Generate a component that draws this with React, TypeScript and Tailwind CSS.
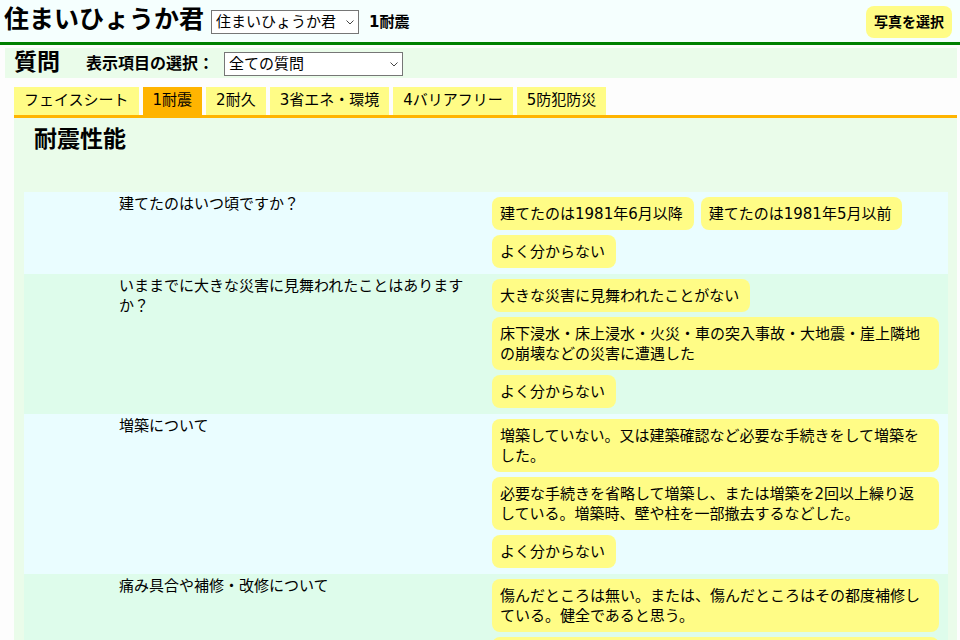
import type { ReactNode } from "react";

const tabs = ["フェイスシート", "1耐震", "2耐久", "3省エネ・環境", "4バリアフリー", "5防犯防災"] as const;

const activeTab = "1耐震";

const questions = [
  {
    title: "建てたのはいつ頃ですか？",
    answers: ["建てたのは1981年6月以降", "建てたのは1981年5月以前", "よく分からない"],
  },
  {
    title: "いままでに大きな災害に見舞われたことはありますか？",
    answers: [
      "大きな災害に見舞われたことがない",
      "床下浸水・床上浸水・火災・車の突入事故・大地震・崖上隣地の崩壊などの災害に遭遇した",
      "よく分からない",
    ],
  },
  {
    title: "増築について",
    answers: [
      "増築していない。又は建築確認など必要な手続きをして増築をした。",
      "必要な手続きを省略して増築し、または増築を2回以上繰り返している。増築時、壁や柱を一部撤去するなどした。",
      "よく分からない",
    ],
  },
  {
    title: "痛み具合や補修・改修について",
    answers: ["傷んだところは無い。または、傷んだところはその都度補修している。健全であると思う。", ""],
  },
];

export default function App() {
  return (
    <div className="h-screen overflow-hidden bg-[#fdfdfd] font-['DejaVu_Sans','Noto_Sans_CJK_JP',sans-serif] text-[15px] leading-5 text-black">
      <header className="flex h-[45px] items-center border-b-3 border-[#008000] bg-[#f5fffe] pt-[2px] pr-2 pl-1">
        <h1 className="pb-1 text-[25px] leading-7 font-bold">住まいひょうか君</h1>
        <SelectBox label="システムの選択" option="住まいひょうか君" className="ml-[7px] w-[148px]" />
        <span className="ml-[10px] font-bold">1耐震</span>
        <button
          type="button"
          className="ml-auto h-8 rounded-lg bg-[#fffc86] px-2 text-[14px] font-bold"
        >
          写真を選択
        </button>
      </header>

      <main className="pt-[3px] pr-[3px] pl-[5px]">
        <div className="flex h-[30px] items-center bg-[#eafcea] pt-[2px] pl-[9px]">
          <h2 className="pb-1 text-[23px] leading-7 font-bold">質問</h2>
          <span className="ml-[26px] text-[16px] font-bold">表示項目の選択：</span>
          <SelectBox label="表示項目の選択" option="全ての質問" className="ml-[10px] w-[179px]" />
        </div>

        <div className="mt-[9px] ml-[9px]">
          <nav className="flex gap-1 border-b-3 border-[#ffb400]">
            {tabs.map((tab) => (
              <a
                key={tab}
                href="#"
                className={
                  tab === activeTab
                    ? "bg-[#ffb400] px-[10px] pt-[3px] pb-[5px]"
                    : "bg-[#fffc86] px-[10px] pt-[3px] pb-[5px]"
                }
              >
                {tab}
              </a>
            ))}
          </nav>

          <section className="bg-[#eafcea] pt-[7px] pr-[9px] pl-[10px]">
            <h3 className="mb-[39px] ml-[10px] text-[23px] leading-7 font-bold">耐震性能</h3>
            <div>
              {questions.map((question) => (
                <Question key={question.title} title={question.title}>
                  {question.answers.map((answer) => (
                    <button
                      key={answer}
                      type="button"
                      className="min-h-[33px] rounded-lg bg-[#fffc86] pt-[7px] pr-[11px] pb-[6px] pl-2 text-left empty:w-full"
                    >
                      {answer}
                    </button>
                  ))}
                </Question>
              ))}
            </div>
          </section>
        </div>
      </main>
    </div>
  );
}

function Question({ title, children }: { title: string; children: ReactNode }) {
  return (
    <div className="grid grid-cols-[minmax(0,95fr)_minmax(0,373fr)_minmax(0,456fr)] odd:bg-[#eafdff] even:bg-[#defceb]">
      <div />
      <p className="pt-[2px] pr-4">{title}</p>
      <div className="flex flex-wrap items-start gap-x-[7px] gap-y-[5px] pt-[5px] pr-[9px] pb-[6px]">
        {children}
      </div>
    </div>
  );
}

function SelectBox({ label, option, className }: { label: string; option: string; className: string }) {
  return (
    <div className={`relative h-6 ${className}`}>
      <select
        aria-label={label}
        className="h-full w-full appearance-none border border-[#767676] bg-white pl-1 text-[15px] leading-5"
      >
        <option>{option}</option>
      </select>
      <svg
        viewBox="0 0 8 5"
        className="pointer-events-none absolute top-[10px] right-[5px] h-[5px] w-2 fill-none stroke-[#444]"
        aria-hidden="true"
      >
        <path d="M0.5 0.5 4 4 7.5 0.5" />
      </svg>
    </div>
  );
}
